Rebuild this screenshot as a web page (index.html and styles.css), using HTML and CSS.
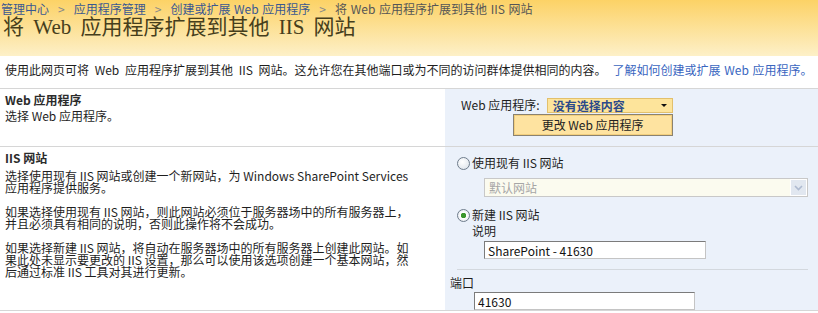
FILE: index.html
```html
<!DOCTYPE html>
<html lang="zh-CN">
<head>
  <meta charset="UTF-8">
  <meta name="viewport" content="width=device-width, initial-scale=1.0">
  <title>将 Web 应用程序扩展到其他 IIS 网站</title>
  <link rel="stylesheet" href="styles.css">
</head>

<body>
<div class="titre">
  <div class="fil">
    <a href="#">管理中心</a><span class="sep">&gt;</span><a href="#">应用程序管理</a><span class="sep">&gt;</span><a href="#">创建或扩展 Web 应用程序</a><span class="sep">&gt;</span><span class="courant">将 Web 应用程序扩展到其他 IIS 网站</span>
  </div>
  <h1>将 Web 应用程序扩展到其他 IIS 网站</h1>
</div>

<div class="intro">
  使用此网页可将 Web 应用程序扩展到其他 IIS 网站。这允许您在其他端口或为不同的访问群体提供相同的内容。<a href="#">了解如何创建或扩展 Web 应用程序。</a>
</div>

<div class="section section-app">
  <div class="aide">
    <h3>Web 应用程序</h3>
    <div>选择 Web 应用程序。</div>
  </div>
  <div class="champs champs-app">
    <div class="ligne-app">
      <span class="etiquette">Web 应用程序:</span>
      <div class="selecteur">
        没有选择内容<span class="fleche"></span>
        <div class="menu">更改 Web 应用程序</div>
      </div>
    </div>
  </div>
</div>

<div class="section">
  <div class="aide">
    <h3>IIS 网站</h3>
    <p>选择使用现有 IIS 网站或创建一个新网站，为 Windows SharePoint Services 应用程序提供服务。</p>
    <p>如果选择使用现有 IIS 网站，则此网站必须位于服务器场中的所有服务器上，并且必须具有相同的说明，否则此操作将不会成功。</p>
    <p>如果选择新建 IIS 网站，将自动在服务器场中的所有服务器上创建此网站。如果此处未显示要更改的 IIS 设置，那么可以使用该选项创建一个基本网站，然后通过标准 IIS 工具对其进行更新。</p>
  </div>
  <div class="champs">
    <div class="choix">
      <label><input type="radio" name="site" class="radio"> 使用现有 IIS 网站</label>
      <div class="liste-off">
        <span>默认网站</span>
        <span class="bouton-liste">
          <svg width="9" height="6" viewBox="0 0 9 6"><path d="M1 1 L4.5 4.5 L8 1" fill="none" stroke="#aebad0" stroke-width="1.6"/></svg>
        </span>
      </div>
      <label class="choix-2"><input type="radio" name="site" class="radio" checked> 新建 IIS 网站</label>
      <div class="sous-titre">说明</div>
      <input type="text" class="texte texte-desc" value="SharePoint - 41630">
      <hr>
    </div>
    <div class="port">
      <div>端口</div>
      <input type="text" class="texte texte-port" value="41630">
    </div>
  </div>
</div>
</body>
</html>
```

FILE: styles.css
```css
body {
  margin: 0;
  font-family: "Noto Sans CJK SC", sans-serif;
  font-size: 12px;
  line-height: 16px;
  color: #1e1e1e;
}
a {
  color: #3966bf;
  text-decoration: none;
}

.titre {
  height: 56px;
  background: linear-gradient(#fcd266, #fdf0c8);
}
.fil {
  line-height: 17px;
  padding-left: 1px;
  white-space: nowrap;
  word-spacing: 1px;
}
.fil a {
  color: #3a5890;
}
.fil .sep {
  color: #888;
  margin: 0 9px;
}
.fil .courant {
  color: #555;
}
h1 {
  margin: 0;
  padding-left: 3px;
  font: normal 21px/20px "Liberation Serif", "Noto Sans CJK SC", serif;
  word-spacing: 4px;
  color: #463e1c;
}

.intro {
  padding: 6px 0 10px 5px;
  border-bottom: 1px solid #d6d6d6;
  white-space: nowrap;
  word-spacing: 3px;
}
.intro a {
  margin-left: 6px;
  word-spacing: 1px;
}

.section {
  display: flex;
  border-bottom: 1px solid #d6d6d6;
}
.section-app {
  min-height: 57px;
}
.aide {
  width: 404px;
  padding: 3px 36px 0 5px;
}
.aide h3 {
  margin: 0;
  font-size: 12px;
  line-height: 16px;
  color: #2b2b2b;
}
.aide p {
  margin: 4px 0 12px;
  line-height: 12px;
}
.aide p + p {
  margin-top: 0;
}

.champs {
  flex: 1;
  background: #ebf1fa;
  padding: 8px 10px 0 5px;
}
.champs-app {
  padding-left: 16px;
}
.ligne-app {
  display: flex;
  align-items: center;
}
.etiquette {
  margin-right: 7px;
}
.selecteur {
  position: relative;
  box-sizing: border-box;
  width: 126px;
  height: 15px;
  padding-left: 5px;
  border: 1px solid #e2c06c;
  background: #fde49b;
  font-weight: bold;
  line-height: 13px;
  color: #2c4a8a;
}
.fleche {
  position: absolute;
  right: 5px;
  top: 5px;
  border-left: 3px solid transparent;
  border-right: 3px solid transparent;
  border-top: 3px solid #111;
}
.menu {
  position: absolute;
  top: 15px;
  right: -1px;
  box-sizing: border-box;
  width: 160px;
  height: 22px;
  border: 1px solid #8a8270;
  box-shadow: inset 0 0 0 1px #f3cf7d;
  background: #fee3a0;
  text-align: center;
  font-weight: normal;
  line-height: 20px;
  color: #222;
}

.choix {
  padding-left: 7px;
}
.choix label {
  display: flex;
  align-items: center;
}
.radio {
  appearance: none;
  width: 13px;
  height: 13px;
  margin: 0 2px 0 0;
  border: 1px solid #6f7d8c;
  border-radius: 50%;
  background: radial-gradient(circle at 40% 35%, #fff, #d9e0e8);
}
.radio:checked {
  background: radial-gradient(circle, #3b962c 0 2.5px, #fff 3px, #d9e0e8);
}
.liste-off {
  display: flex;
  justify-content: space-between;
  box-sizing: border-box;
  height: 19px;
  margin: 7px 0 0 27px;
  padding-left: 4px;
  border: 1px solid #c8c8c8;
  background: #fbfbef;
  line-height: 17px;
  color: #a6a6a6;
}
.bouton-liste {
  display: flex;
  align-items: center;
  justify-content: center;
  width: 15px;
  border: 1px solid #fff;
  background: #e1e7f0;
}
.choix-2 {
  margin-top: 10px;
}
.sous-titre {
  padding-left: 15px;
}
.texte {
  display: block;
  box-sizing: border-box;
  height: 18px;
  padding: 0 3px;
  border: 1px solid;
  border-color: #7b7b7b #c4c4c4 #c4c4c4 #7b7b7b;
  background: #fff;
  font: 12px "Noto Sans CJK SC", sans-serif;
  color: #111;
}
.texte-desc {
  width: 222px;
  margin: 2px 0 0 27px;
}
hr {
  margin: 10px 0 0;
  border: none;
  border-top: 1px solid #d3d8de;
}
.port {
  padding-top: 5px;
}
.texte-port {
  width: 221px;
  margin: 1px 0 0 24px;
}
```
